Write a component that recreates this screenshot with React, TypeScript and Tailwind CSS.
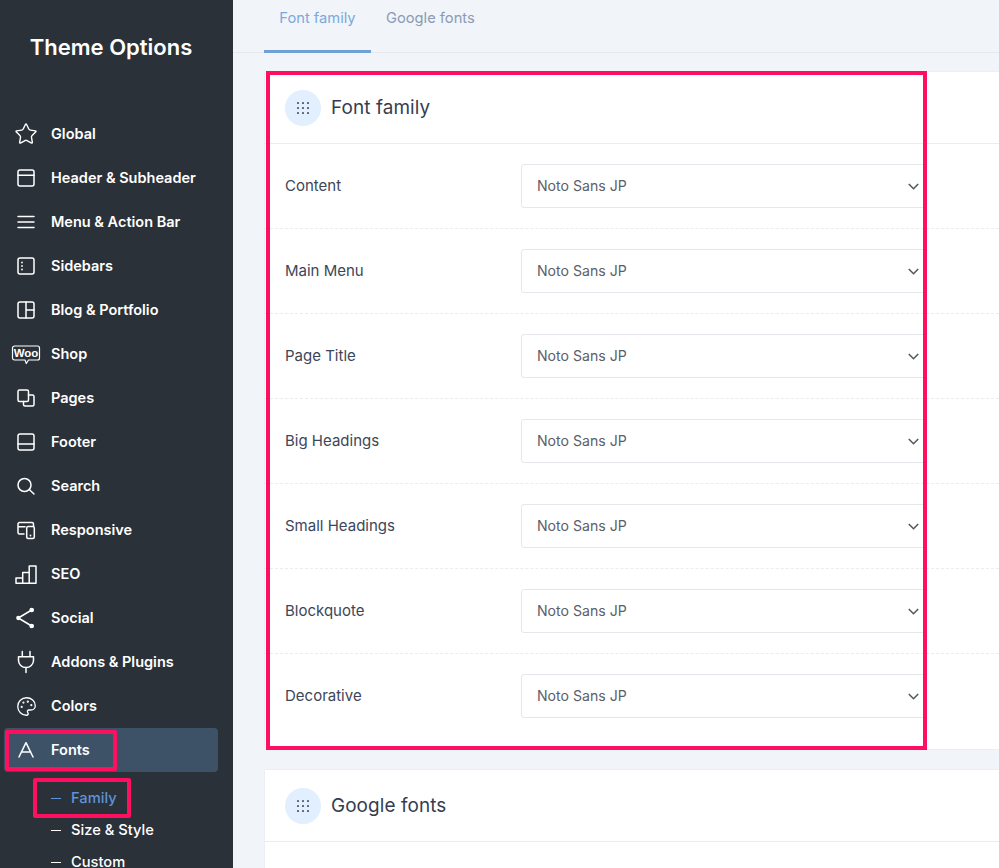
import { Palette, Star } from "lucide-react";
import type { ReactNode } from "react";

const Ico = ({ children }: { children: ReactNode }) => (
  <svg
    width="24"
    height="24"
    viewBox="0 0 24 24"
    fill="none"
    stroke="currentColor"
    strokeWidth="1.5"
    strokeLinecap="round"
    strokeLinejoin="round"
    className="overflow-visible shrink-0"
  >
    {children}
  </svg>
);

const menu: { label: string; icon: ReactNode }[] = [
  { label: "Global", icon: <Star size={24} strokeWidth={1.4} /> },
  {
    label: "Header & Subheader",
    icon: (
      <Ico>
        <rect x="4" y="4" width="16" height="16" rx="2" />
        <path d="M4 9.3h16" />
      </Ico>
    ),
  },
  {
    label: "Menu & Action Bar",
    icon: (
      <Ico>
        <path d="M4 6.5h16M4 12h16M4 17.5h16" />
      </Ico>
    ),
  },
  {
    label: "Sidebars",
    icon: (
      <Ico>
        <rect x="4" y="4" width="16" height="16" rx="2" />
        <path d="M8 8.5v0M8 12v0M8 15.5v0" strokeWidth="1.8" />
      </Ico>
    ),
  },
  {
    label: "Blog & Portfolio",
    icon: (
      <Ico>
        <rect x="4" y="4" width="16" height="16" rx="2" />
        <path d="M12 4v16M12 12h8" />
      </Ico>
    ),
  },
  {
    label: "Shop",
    icon: (
      <Ico>
        <path
          d="M0.5 4h23a2 2 0 0 1 2 2v10a2 2 0 0 1-2 2H14.500l-2.200 3.500-1.300-3.500H0.500a2 2 0 0 1-2-2V6a2 2 0 0 1 2-2z"
          strokeWidth="1.200"
        />
        <text
          x="12"
          y="15.300"
          textAnchor="middle"
          fontSize="11.500"
          fontWeight="700"
          fill="currentColor"
          stroke="none"
          fontFamily="'Liberation Sans', sans-serif"
        >
          Woo
        </text>
      </Ico>
    ),
  },
  {
    label: "Pages",
    icon: (
      <Ico>
        <rect x="4" y="4" width="10.5" height="11.5" rx="1.5" />
        <path d="M14.5 9H18.5a1.5 1.5 0 0 1 1.5 1.5v8a1.5 1.5 0 0 1-1.5 1.5H11a1.5 1.5 0 0 1-1.5-1.5v-3" />
      </Ico>
    ),
  },
  {
    label: "Footer",
    icon: (
      <Ico>
        <rect x="4" y="4" width="16" height="16" rx="2" />
        <path d="M4 14h16" />
      </Ico>
    ),
  },
  {
    label: "Search",
    icon: (
      <Ico>
        <circle cx="10.5" cy="11" r="6.5" />
        <path d="M15.3 15.5 20 20" />
      </Ico>
    ),
  },
  {
    label: "Responsive",
    icon: (
      <Ico>
        <path d="M10 16H5.5A1.5 1.5 0 0 1 4 14.500V6a1.500 1.500 0 0 1 1.500-1.500H18A1.500 1.500 0 0 1 19.500 6v2M4 8.700h7" />
        <rect x="12.700" y="8.500" width="7.600" height="12" rx="1.500" />
        <path d="M16.500 17.500v0" strokeWidth="1.800" />
      </Ico>
    ),
  },
  {
    label: "SEO",
    icon: (
      <Ico>
        <path d="M2 21.300V16h6.700v5.300zM8.700 21.300V10.500h6.500v10.800zM15.200 21.300V4H22v17.300z" />
      </Ico>
    ),
  },
  {
    label: "Social",
    icon: (
      <Ico>
        <path d="M17.700 4 4.300 12l13.400 8" />
        <circle cx="17.700" cy="4" r="1.600" fill="currentColor" />
        <circle cx="4.300" cy="12" r="1.400" fill="currentColor" />
        <circle cx="17.700" cy="20" r="1.600" fill="currentColor" />
      </Ico>
    ),
  },
  {
    label: "Addons & Plugins",
    icon: (
      <Ico>
        <path d="M8.300 1.500v5.200M16 1.500v5.200M4.500 6.700h15v3.800a7.500 7 0 0 1-15 0zM12 17.500v5" />
      </Ico>
    ),
  },
  {
    label: "Colors",
    icon: (
      <span className="flex w-6 justify-center">
        <Palette size={21} strokeWidth={1.5} />
      </span>
    ),
  },
];

const fields = [
  "Content",
  "Main Menu",
  "Page Title",
  "Big Headings",
  "Small Headings",
  "Blockquote",
  "Decorative",
];

const Dots = () => (
  <span className="flex h-9 w-9 items-center justify-center rounded-full bg-[#e1efff]">
    <svg width="14" height="14" viewBox="0 0 14 14" fill="#5a6472">
      {[2, 7, 12].map((y) =>
        [2, 7, 12].map((x) => <rect key={`${x}-${y}`} x={x - 1} y={y - 1} width="2" height="2" rx="0.6" />)
      )}
    </svg>
  </span>
);

const CardHead = ({ title }: { title: string }) => (
  <div className="flex h-[72px] items-center gap-2.5 border-b border-[#e8ecf3] pl-5">
    <Dots />
    <h2 className="pt-0.5 text-[18.9px] font-normal tracking-[0.1px] text-[#343d4f]">{title}</h2>
  </div>
);

export default function App() {
  return (
    <div className="relative flex h-[868px] w-[999px] overflow-hidden bg-[#f1f4f8] font-['Inter',sans-serif]">
      <aside className="flex w-[233px] shrink-0 flex-col bg-[#2a3139] text-white">
        <div className="flex h-[94px] w-[222px] shrink-0 items-center justify-center text-[22px] font-semibold">
          Theme Options
        </div>
        <nav className="mt-[18px] flex shrink-0 flex-col">
          {menu.map((item) => (
            <a key={item.label} className="flex h-[44px] shrink-0 items-center pl-3.5 text-[14.5px] font-semibold">
              {item.icon}
              <span className="ml-[13px]">{item.label}</span>
            </a>
          ))}
          <a className="ml-1 flex h-[44px] w-[214px] shrink-0 items-center rounded-sm bg-[#3e5267] pl-2.5 text-[14.5px] font-semibold">
            <Ico>
              <path d="M5 19 12 4.700 19 19M7.200 14h9.600" />
            </Ico>
            <span className="ml-[13px]">Fonts</span>
          </a>
        </nav>
        <ul className="mt-2.5 flex shrink-0 flex-col pl-[51px] text-[14.7px] font-medium">
          <li className="flex h-8 shrink-0 items-center text-[#5e94d8]">
            <span className="mr-2.5 h-px w-2.5 bg-[#5e94d8]" />
            Family
          </li>
          <li className="flex h-8 shrink-0 items-center">
            <span className="mr-2.5 h-px w-2.5 bg-white" />
            Size &amp; Style
          </li>
          <li className="flex h-8 shrink-0 items-center">
            <span className="mr-2.5 h-px w-2.5 bg-white" />
            Custom
          </li>
        </ul>
      </aside>

      <main className="min-w-0 flex-1">
        <div className="flex h-[53px] border-b border-[#e6eaf0] pl-[31px] text-[14.7px]">
          <div className="-mb-px flex h-[53px] w-[107px] justify-center border-b-[3px] border-[#6fa1d6] pt-[7px] text-[#7aa9dc]">
            Font family
          </div>
          <div className="ml-[15px] pt-[7px] text-[#8a9bb5]">Google fonts</div>
        </div>

        <section className="ml-8 mt-[19px] h-[677px] bg-white shadow-[0_0_2px_rgba(40,60,90,0.08)]">
          <CardHead title="Font family" />
          {fields.map((name) => (
            <div
              key={name}
              className="flex h-[85px] items-center border-b border-dashed border-[#e9ecf0] pl-5 last:border-transparent"
            >
              <span className="w-[236px] text-[15px] text-[#3d4658]">{name}</span>
              <div className="flex h-[44px] w-[405px] items-center justify-between rounded-[3px] border border-[#e4e7eb] bg-white pl-[15px] pr-1.5 text-[14.1px] text-[#5c6068]">
                <span className="-mt-px">Noto Sans JP</span>
                <svg width="11" height="7" viewBox="0 0 11 7" fill="none" stroke="#55595f" strokeWidth="1.600">
                  <path d="M0.800 1 5.500 5.700 10.200 1" />
                </svg>
              </div>
            </div>
          ))}
        </section>

        <section className="ml-8 mt-[21px] h-[200px] bg-white shadow-[0_0_2px_rgba(40,60,90,0.08)]">
          <CardHead title="Google fonts" />
        </section>
      </main>

      {/* annotation boxes drawn over the screenshot */}
      <div className="absolute left-[266px] top-[71px] h-[679px] w-[661px] border-4 border-[#ff0f5f]" />
      <div className="absolute left-[5px] top-[730px] h-[41px] w-[112px] rounded-[2px] border-4 border-[#ff0f5f]" />
      <div className="absolute left-[33px] top-[778px] h-[40px] w-[98px] rounded-[2px] border-4 border-[#ff0f5f]" />
    </div>
  );
}
